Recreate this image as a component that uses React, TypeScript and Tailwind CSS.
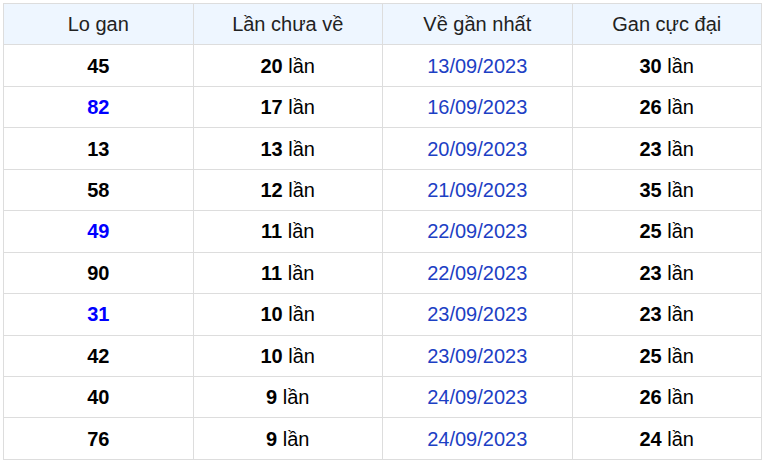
import React from 'react';

type Row = {
  lo: string;
  hot: boolean;
  chua: number;
  ngay: string;
  max: number;
};

const rows: Row[] = [
  { lo: '45', hot: false, chua: 20, ngay: '13/09/2023', max: 30 },
  { lo: '82', hot: true, chua: 17, ngay: '16/09/2023', max: 26 },
  { lo: '13', hot: false, chua: 13, ngay: '20/09/2023', max: 23 },
  { lo: '58', hot: false, chua: 12, ngay: '21/09/2023', max: 35 },
  { lo: '49', hot: true, chua: 11, ngay: '22/09/2023', max: 25 },
  { lo: '90', hot: false, chua: 11, ngay: '22/09/2023', max: 23 },
  { lo: '31', hot: true, chua: 10, ngay: '23/09/2023', max: 23 },
  { lo: '42', hot: false, chua: 10, ngay: '23/09/2023', max: 25 },
  { lo: '40', hot: false, chua: 9, ngay: '24/09/2023', max: 26 },
  { lo: '76', hot: false, chua: 9, ngay: '24/09/2023', max: 24 },
];

const cell = 'border border-[#dddddd] text-center p-0 font-normal';

export default function App() {
  return (
    <div className="p-[3px] bg-white" style={{ fontFamily: '"Liberation Sans", Arial, sans-serif' }}>
      <table className="w-full border-collapse table-fixed text-[20px] leading-none">
        <thead>
          <tr className="h-[41.45px] bg-[#eef6ff] text-[#222222]">
            <th className={cell}>Lo gan</th>
            <th className={cell}>Lần chưa về</th>
            <th className={cell}>Về gần nhất</th>
            <th className={cell}>Gan cực đại</th>
          </tr>
        </thead>
        <tbody>
          {rows.map((r, i) => (
            <tr key={i} className="h-[41.45px] text-black">
              <td className={cell}>
                <b className={r.hot ? 'text-[#0000ff]' : 'text-black'}>{r.lo}</b>
              </td>
              <td className={cell}>
                <b>{r.chua}</b> lần
              </td>
              <td className={cell + ' text-[#1c40c4]'}>{r.ngay}</td>
              <td className={cell}>
                <b>{r.max}</b> lần
              </td>
            </tr>
          ))}
        </tbody>
      </table>
    </div>
  );
}
